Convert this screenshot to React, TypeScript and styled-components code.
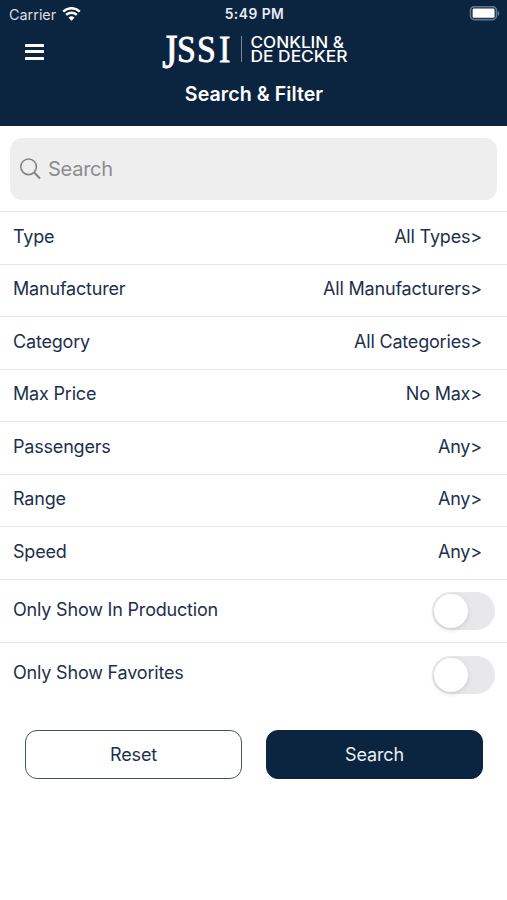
import React, { useState } from 'react';

import styled, { createGlobalStyle } from 'styled-components';

const GlobalStyle = createGlobalStyle`
  :root {
    --navy: #0b2440;
    --ink: #1c304c;
    --white: #ffffff;
    --line: #e6e7e9;
    --field: #eeeeee;
    --grey: #8c8c8e;
  }
  * {
    box-sizing: border-box;
  }
  body {
    margin: 0;
    background-color: var(--white);
    color: var(--ink);
    font-family: Inter, 'Liberation Sans', sans-serif;
  }
`;

const Screen = styled.div`
  min-height: 900px;
  background-color: var(--white);
`;

const Header = styled.header`
  height: 125.5px;
  background-color: var(--navy);
  color: var(--white);
`;

const StatusBar = styled.div`
  display: grid;
  grid-template-columns: 1fr auto 1fr;
  align-items: center;
  height: 28px;
  padding: 0 7px 0 9px;
`;

const Carrier = styled.div`
  display: flex;
  align-items: center;
  gap: 6px;
  font-size: 14.4px;
  color: #d9dee5;
`;

const Clock = styled.div`
  font-size: 13.8px;
  font-weight: 600;
  letter-spacing: 0.5px;
  color: #e9edf2;
`;

const BatteryIcon = styled.svg`
  justify-self: end;
`;

const NavBar = styled.div`
  display: grid;
  grid-template-columns: 1fr auto 1fr;
  height: 50px;
  padding: 0 23px 0 25px;
`;

const MenuButton = styled.button`
  display: flex;
  flex-direction: column;
  gap: 3.4px;
  width: 19px;
  margin-top: 16px;
  padding: 0;
  border: 0;
  background: none;
  span {
    width: 19px;
    height: 3px;
    border-radius: 0.5px;
    background-color: var(--white);
  }
`;

const Title = styled.h1`
  margin: 4px 0 0 1px;
  font-size: 19.6px;
  font-weight: 600;
  line-height: 24px;
  letter-spacing: 0.05px;
  text-align: center;
`;

const SearchField = styled.label`
  display: flex;
  align-items: center;
  gap: 7px;
  height: 62px;
  margin: 12.5px 10px 11px;
  padding: 0 10px;
  border-radius: 12px;
  background-color: var(--field);
  input {
    flex: 1;
    padding: 0;
    border: 0;
    outline: 0;
    background: none;
    color: var(--ink);
    font: 400 20px Inter, sans-serif;
    letter-spacing: -0.25px;
  }
  input::placeholder {
    color: var(--grey);
    opacity: 1;
  }
`;

const Row = styled.div<{ $tall?: boolean }>`
  display: flex;
  justify-content: space-between;
  height: ${({ $tall }) => ($tall ? '63.5px' : '52.5px')};
  padding: ${({ $tall }) => ($tall ? '12.5px 12px 0 13px' : '12.5px 25px 0 13px')};
  border-top: 1.5px solid var(--line);
  font-size: 18px;
  line-height: 24px;
  letter-spacing: -0.19px;
`;

const ToggleLabel = styled.span`
  margin-top: 5.5px;
`;

const Toggle = styled.button<{ $on: boolean }>`
  display: flex;
  justify-content: ${({ $on }) => ($on ? 'flex-end' : 'flex-start')};
  width: 63px;
  height: 38px;
  padding: 2px;
  border: 0;
  border-radius: 19px;
  background-color: ${({ $on }) => ($on ? 'var(--navy)' : '#e8e8ea')};
`;

const Knob = styled.span`
  width: 34px;
  height: 34px;
  border-radius: 50%;
  background-color: var(--white);
  box-shadow: 0 2px 5px rgba(0, 0, 0, 0.12);
`;

const Actions = styled.div`
  display: grid;
  grid-template-columns: 1fr 1fr;
  gap: 24px;
  padding: 24px 24px 0 25px;
`;

const Button = styled.button<{ $filled?: boolean }>`
  height: 49px;
  padding: 0;
  border: 1.5px solid ${({ $filled }) => ($filled ? 'var(--navy)' : '#43536b')};
  border-radius: 12px;
  background-color: ${({ $filled }) => ($filled ? 'var(--navy)' : 'var(--white)')};
  color: ${({ $filled }) => ($filled ? '#e9eef4' : 'var(--ink)')};
  font: 400 18px Inter, sans-serif;
  letter-spacing: -0.15px;
`;

const filters = [
  { id: 1, name: 'Type', value: 'All Types' },
  { id: 2, name: 'Manufacturer', value: 'All Manufacturers' },
  { id: 3, name: 'Category', value: 'All Categories' },
  { id: 4, name: 'Max Price', value: 'No Max' },
  { id: 5, name: 'Passengers', value: 'Any' },
  { id: 6, name: 'Range', value: 'Any' },
  { id: 7, name: 'Speed', value: 'Any' },
];

function Wifi() {
  return (
    <svg width="19" height="15" viewBox="0 0 19 15" fill="none">
      <path d="M1.2 4.6a11.8 11.8 0 0 1 16.6 0" stroke="#fff" strokeWidth="2.5" />
      <path d="M4.2 7.9a7.6 7.6 0 0 1 10.6 0" stroke="#fff" strokeWidth="2.4" />
      <path d="M9.5 13.8 6.5 10.8a4.3 4.3 0 0 1 6 0z" fill="#fff" />
    </svg>
  );
}

function Battery() {
  return (
    <BatteryIcon width="31" height="16" viewBox="0 0 31 16" fill="none">
      <rect x="1.5" y="0.6" width="26" height="13" rx="3.8" stroke="#66758a" strokeWidth="1.6" />
      <rect x="3.6" y="2.6" width="22" height="9.2" rx="1.4" fill="#fff" />
      <path d="M28.8 5c2 .6 2 4.2 0 4.8z" fill="#66758a" />
    </BatteryIcon>
  );
}

function Logo() {
  return (
    <svg width="188" height="48" viewBox="0 0 188 48" fill="#fff" overflow="visible">
      <g fontFamily="'Liberation Serif', serif" stroke="#fff" strokeWidth="0.8">
        <text transform="translate(1.3 40.3) scale(1 1.24)" fontSize="39">J</text>
        <text transform="translate(0 34) scale(0.88 1)" x="18.2 40.9 65.9" fontSize="38.5">SSI</text>
      </g>
      <path d="M80.5 8v26" stroke="#7b899b" />
      <text fontFamily="Inter, sans-serif" fontSize="15.8" fontWeight="500">
        <tspan x="89.5" y="20" textLength="93.5" lengthAdjust="spacingAndGlyphs">CONKLIN &amp;</tspan>
        <tspan x="89.5" y="34" textLength="97" lengthAdjust="spacingAndGlyphs">DE DECKER</tspan>
      </text>
    </svg>
  );
}

function SearchIcon() {
  return (
    <svg width="21" height="22" viewBox="0 0 21 22" fill="none" stroke="#858587">
      <circle cx="8.6" cy="8.8" r="7.8" strokeWidth="1.6" />
      <path d="M14.2 14.6 20 20.4" strokeWidth="2.1" />
    </svg>
  );
}

export default function App() {
  const [search, setSearch] = useState('');
  const [production, setProduction] = useState(false);
  const [favorites, setFavorites] = useState(false);

  function reset() {
    setSearch('');
    setProduction(false);
    setFavorites(false);
  }

  return (
    <Screen>
      <GlobalStyle />
      <Header>
        <StatusBar>
          <Carrier>
            Carrier <Wifi />
          </Carrier>
          <Clock>5:49 PM</Clock>
          <Battery />
        </StatusBar>
        <NavBar>
          <MenuButton aria-label="Menu">
            <span />
            <span />
            <span />
          </MenuButton>
          <Logo />
        </NavBar>
        <Title>Search &amp; Filter</Title>
      </Header>
      <SearchField>
        <SearchIcon />
        <input
          type="text"
          placeholder="Search"
          value={search}
          onChange={(e) => setSearch(e.target.value)}
        />
      </SearchField>
      {filters.map((filter) => (
        <Row key={filter.id}>
          <span>{filter.name}</span>
          <span>{filter.value}&gt;</span>
        </Row>
      ))}
      <Row $tall>
        <ToggleLabel>Only Show In Production</ToggleLabel>
        <Toggle $on={production} onClick={() => setProduction(!production)}>
          <Knob />
        </Toggle>
      </Row>
      <Row $tall>
        <ToggleLabel>Only Show Favorites</ToggleLabel>
        <Toggle $on={favorites} onClick={() => setFavorites(!favorites)}>
          <Knob />
        </Toggle>
      </Row>
      <Actions>
        <Button onClick={reset}>Reset</Button>
        <Button $filled>Search</Button>
      </Actions>
    </Screen>
  );
}
